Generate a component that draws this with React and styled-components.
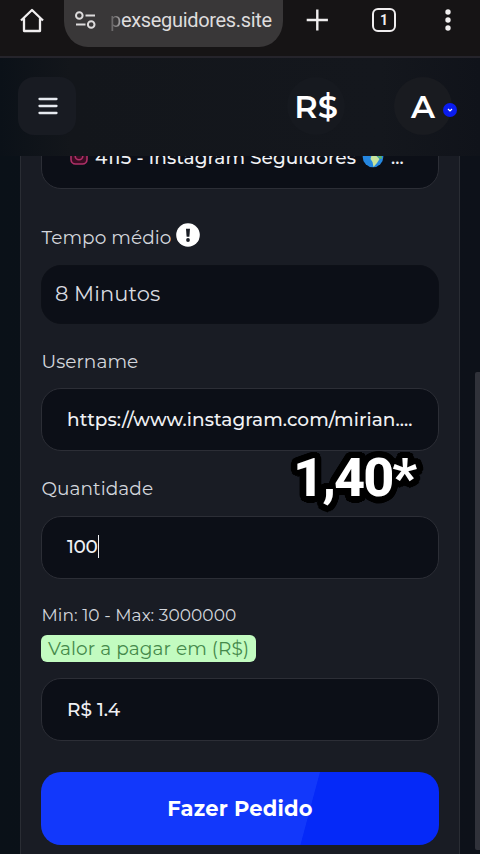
import React from "react";
import styled, { createGlobalStyle } from "styled-components";

const GlobalStyle = createGlobalStyle`
  * {
    box-sizing: border-box;
  }

  body {
    margin: 0;
    background-color: #0b1118;
    font-family: Montserrat, Inter, sans-serif;
    overflow: hidden;
  }
`;

const Screen = styled.div`
  position: relative;
  display: flex;
  flex-direction: column;
  width: 480px;
  height: 854px;
  overflow: hidden;
  background: linear-gradient(90deg, #0a1118 0%, #0c1119 50%, #0d1119 100%);
`;

const BrowserBar = styled.div`
  display: flex;
  align-items: flex-start;
  flex: none;
  height: 58px;
  padding-left: 18px;
  background-color: #161415;
  border-bottom: 2px solid #25242b;
`;

const BarIcon = styled.svg`
  display: block;
  flex: none;
  margin-left: ${(props) => props.$left || 0}px;
  margin-top: ${(props) => props.$top || 0}px;
`;

const UrlBar = styled.div`
  display: flex;
  flex: none;
  width: 219px;
  height: 47px;
  margin-left: 18px;
  padding-left: 10px;
  border-radius: 0 0 24px 24px / 0 0 26px 26px;
  background-color: #393738;
`;

const UrlText = styled.div`
  margin-left: 13px;
  line-height: 41px;
  font-family: Roboto, sans-serif;
  font-size: 20px;
  letter-spacing: -0.32px;
  color: #dedcdd;
  white-space: nowrap;
`;

const Faded = styled.span`
  background: linear-gradient(90deg, #5c5a5b, #a5a3a4);
  background-clip: text;
  color: transparent;
`;

const Header = styled.header`
  display: flex;
  align-items: center;
  flex: none;
  height: 98px;
  padding: 0 0 2px 18px;
  background: linear-gradient(90deg, #0b1118 0, #13161b 70px, #14171d 380px, #10131a 480px);
`;

const MenuButton = styled.div`
  display: flex;
  align-items: center;
  justify-content: center;
  width: 58px;
  height: 58px;
  padding-left: 1px;
  border-radius: 16px;
  background-color: #181b22;
`;

const Currency = styled.div`
  display: flex;
  align-items: center;
  justify-content: center;
  width: 58px;
  height: 58px;
  margin-left: 211px;
  border-radius: 50%;
  background-color: #16191f;
  font-size: 32px;
  font-weight: 600;
  color: #ffffff;
`;

const Avatar = styled(Currency)`
  position: relative;
  margin-left: 49px;
  background-color: #191b20;
`;

const AvatarBadge = styled.div`
  position: absolute;
  right: -5px;
  bottom: 18px;
  display: flex;
  align-items: center;
  justify-content: center;
  width: 14px;
  height: 14px;
  border-radius: 50%;
  background-color: #0a1cf0;
`;

const Content = styled.main`
  flex: 1;
  min-height: 0;
  overflow: hidden;
  padding: 0 20px;
`;

const Card = styled.form`
  display: flex;
  flex-direction: column;
  height: 698px;
  padding: 0 20px;
  background-color: #191c24;
  border: 1px solid #2a2d34;
  border-top: none;
  border-bottom: none;
`;

const Field = styled.div`
  display: flex;
  align-items: center;
  flex: none;
  height: 63px;
  margin-top: ${(props) => props.$top || 0}px;
  padding-left: ${(props) => props.$inset || 25}px;
  padding-bottom: ${(props) => props.$lift || 0}px;
  border: 1px solid #2c2e36;
  border-radius: 20px;
  background-color: #0c0f17;
  font-size: ${(props) => props.$size || 18.5}px;
  font-weight: 500;
  letter-spacing: ${(props) => props.$spacing || 0}px;
  color: #f0f1f4;
  white-space: nowrap;
`;

const ReadOnlyField = styled(Field)`
  height: 59px;
  border-color: #0d1017;
  font-weight: 400;
  color: #d9dbe0;
`;

const Label = styled.label`
  display: flex;
  align-items: center;
  height: 28px;
  margin-top: ${(props) => props.$top}px;
  padding-left: 0.5px;
  padding-bottom: ${(props) => props.$lift || 0}px;
  font-size: ${(props) => props.$size || 18.5}px;
  letter-spacing: 0.06px;
  color: #d3d6dc;
  white-space: nowrap;
`;

const LabelIcon = styled.svg`
  display: block;
  margin: -4px 0 0 5px;
`;

const ServiceName = styled.span`
  margin: 0 6px 0 7px;
  letter-spacing: 0.04px;
`;

const Caret = styled.span`
  width: 1.5px;
  height: 23px;
  background-color: #f0f1f4;
`;

const PriceTag = styled.div`
  align-self: flex-start;
  flex: none;
  width: 215px;
  height: 27px;
  margin-top: 5px;
  padding-left: 7px;
  border-radius: 6px;
  background-color: #c2fbc0;
  line-height: 27px;
  font-size: 18.5px;
  letter-spacing: 0.09px;
  color: #45894b;
  white-space: nowrap;
`;

const SubmitButton = styled.button`
  flex: none;
  height: 73px;
  margin-top: 31px;
  padding: 0 0 1px;
  border: none;
  border-radius: 20px;
  background: linear-gradient(105deg, #1238fb 0 66.7%, #0529f8 66.9% 100%);
  font-family: inherit;
  font-size: 21px;
  font-weight: 700;
  letter-spacing: 0.2px;
  color: #ffffff;
`;

// rounded outline: shadows placed on a circle around the glyphs
const outline = Array.from({ length: 32 }, (_, i) => {
  const angle = (i * Math.PI) / 16;
  const x = (Math.cos(angle) * 6.5).toFixed(2);
  const y = (Math.sin(angle) * 6.5).toFixed(2);
  return `${x}px ${y}px 0 #000000`;
}).join(", ");

const Caption = styled.div`
  position: absolute;
  left: 293px;
  top: 446px;
  line-height: 64px;
  font-family: Roboto, sans-serif;
  font-size: 54px;
  font-weight: 800;
  letter-spacing: -2px;
  color: #ffffff;
  text-shadow: ${outline}, 0 0 5px #000000;
`;

const ScrollThumb = styled.div`
  position: absolute;
  right: 0;
  top: 372px;
  width: 5px;
  height: 478px;
  border-radius: 2px 0 0 2px;
  background-color: #30323a;
`;

const HomeIcon = () => (
  <BarIcon width="28" height="28" viewBox="0 0 28 28" $top={6}>
    <path
      d="M3 14.5 14 4l11 10.5M6 12.5V25h16V12.5"
      fill="none"
      stroke="#f0eeef"
      strokeWidth="2.3"
      strokeLinejoin="round"
    />
  </BarIcon>
);

const TuneIcon = () => (
  <BarIcon width="23" height="20" viewBox="0 0 23 20" $top={10}>
    <g fill="none" stroke="#dddbdc" strokeWidth="2">
      <circle cx="5.3" cy="5.5" r="3.3" />
      <path d="M11.5 5.5H21M2 14.5h9.5" />
      <circle cx="17.2" cy="14.5" r="3.3" />
    </g>
  </BarIcon>
);

const PlusIcon = () => (
  <BarIcon width="24" height="24" viewBox="0 0 24 24" $left={22} $top={8}>
    <path d="M12.3 1.5v21M1.7 12h21.2" stroke="#f0eeef" strokeWidth="2.4" />
  </BarIcon>
);

const TabCount = styled.div`
  display: flex;
  align-items: center;
  justify-content: center;
  width: 24px;
  height: 24px;
  margin: 8px 0 0 43px;
  border: 2.3px solid #f0eeef;
  border-radius: 6px;
  font-family: Roboto, sans-serif;
  font-size: 14px;
  font-weight: 700;
  color: #f0eeef;
`;

const DotsIcon = () => (
  <BarIcon width="8" height="24" viewBox="0 0 8 24" $left={48} $top={8}>
    <g fill="#f0eeef">
      <circle cx="4" cy="4" r="2.7" />
      <circle cx="4" cy="12" r="2.7" />
      <circle cx="4" cy="20" r="2.7" />
    </g>
  </BarIcon>
);

const InstagramIcon = () => (
  <svg width="18" height="20" viewBox="0 0 18 20">
    <rect x="1" y="1" width="16" height="16" rx="4.5" fill="#3a0c22" stroke="#b03068" strokeWidth="1.6" />
    <circle cx="9" cy="9" r="3.8" fill="none" stroke="#b03068" strokeWidth="1.6" />
  </svg>
);

const GlobeIcon = () => (
  <svg width="22" height="22" viewBox="0 0 22 22">
    <circle cx="11" cy="11" r="10.3" fill="#2587e0" />
    <path d="M3 5 9 2l3 4-3 3-4 1Z" fill="#74bd6b" />
    <path d="m9.500 9.500 5 .5 3 3-2.500 4-3.500 4-1-5-2-3Z" fill="#c9e59c" />
    <path d="m14 3 5 4 1 6-3-1-3-4Z" fill="#61b65d" />
  </svg>
);

const App = () => {
  return (
    <>
      <GlobalStyle />
      <Screen>
        <BrowserBar>
          <HomeIcon />
          <UrlBar>
            <TuneIcon />
            <UrlText>
              <Faded>p</Faded>exseguidores.site
            </UrlText>
          </UrlBar>
          <PlusIcon />
          <TabCount>1</TabCount>
          <DotsIcon />
        </BrowserBar>

        <Header>
          <MenuButton>
            <svg width="20" height="20" viewBox="0 0 20 20">
              <path
                d="M1.500 3h17M1.500 10h17M1.500 17h17"
                stroke="#e6eaf0"
                strokeWidth="2.3"
                strokeLinecap="round"
              />
            </svg>
          </MenuButton>
          <Currency>R$</Currency>
          <Avatar>
            A
            <AvatarBadge>
              <svg width="6" height="4" viewBox="0 0 6 4">
                <path d="M1 1l2 2 2-2" fill="none" stroke="#ffffff" strokeWidth="1.2" />
              </svg>
            </AvatarBadge>
          </Avatar>
        </Header>

        <Content>
          <Card>
            <Field $top={-30} $inset={28} $lift={1}>
              <InstagramIcon />
              <ServiceName>4115 - Instagram Seguidores</ServiceName>
              <GlobeIcon />
              <ServiceName>...</ServiceName>
            </Field>

            <Label $top={34}>
              Tempo médio
              <LabelIcon width="24" height="24" viewBox="0 0 24 24">
                <circle cx="12" cy="12" r="11.8" fill="#ffffff" />
                <path d="M10 5.800h4l-.6 8h-2.800Z" fill="#191c24" />
                <circle cx="12" cy="17" r="1.900" fill="#191c24" />
              </LabelIcon>
            </Label>
            <ReadOnlyField $top={14} $inset={13} $size={21} $spacing={0.1} $lift={2}>
              8 Minutos
            </ReadOnlyField>

            <Label $top={23}>Username</Label>
            <Field $top={13} $spacing={0.06}>
              https://www.instagram.com/mirian....
            </Field>

            <Label $top={23}>Quantidade</Label>
            <Field $top={14} $spacing={-0.3} $lift={2}>
              100
              <Caret />
            </Field>

            <Label $top={23} $size={17} $lift={2}>
              Min: 10 - Max: 3000000
            </Label>
            <PriceTag>Valor a pagar em (R$)</PriceTag>
            <Field $top={16}>R$ 1.4</Field>

            <SubmitButton type="button">Fazer Pedido</SubmitButton>
          </Card>
        </Content>

        <Caption>1,40*</Caption>
        <ScrollThumb />
      </Screen>
    </>
  );
};

export default App;
